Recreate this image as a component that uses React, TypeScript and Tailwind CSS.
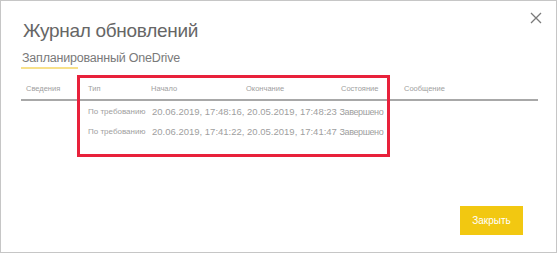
import React from "react";

const rows = [
  { type: "По требованию", text: "20.06.2019, 17:48:16, 20.05.2019, 17:48:23", status: "Завершено" },
  { type: "По требованию", text: "20.06.2019, 17:41:22, 20.05.2019, 17:41:47", status: "Завершено" },
];

export default function App() {
  return (
    <div className="relative w-[557px] h-[253px] bg-white border border-[#c6c6c6] overflow-hidden font-['Liberation_Sans',Arial,sans-serif]">
      <button className="absolute right-[12px] top-[9px] w-[16px] h-[16px] flex items-center justify-center">
        <svg width="12" height="12" viewBox="0 0 12 12">
          <path d="M1 1 L11 11 M11 1 L1 11" stroke="#7a7a7a" strokeWidth="1.3" />
        </svg>
      </button>

      <div className="pl-[20px] pt-[17px]">
        <h1 className="text-[19px] leading-[26px] text-[#666666] pl-[2px] tracking-[-0.3px]">Журнал обновлений</h1>
        <div className="mt-[6px] inline-block">
          <div className="text-[12.5px] leading-[16px] text-[#7a7a7a] pl-[1px] tracking-[-0.2px]">Запланированный OneDrive</div>
          <div className="mt-[1px] h-[2px] w-[57px] bg-[#f7e08a]" />
        </div>

        <div className="mt-[9px] w-[517px]">
          <div className="flex items-center h-[23px] text-[7.5px] text-[#a0a0a0] border-b-2 border-[#a8a8a8]">
            <div className="w-[67px] pl-[5px]">Сведения</div>
            <div className="w-[63px]">Тип</div>
            <div className="w-[95px]">Начало</div>
            <div className="w-[95px]">Окончание</div>
            <div className="w-[63px]">Состояние</div>
            <div className="w-[80px]">Сообщение</div>
          </div>
          {rows.map((r, i) => (
            <div key={i} className={`flex items-center h-[20px] text-[#a0a0a0] ${i === 0 ? "mt-[1px]" : ""}`}>
              <div className="w-[67px]" />
              <div className="w-[64px] text-[8px] whitespace-nowrap">{r.type}</div>
              <div className="text-[9.5px] whitespace-nowrap">
                {r.text}{" "}
                <span className="text-[9px] tracking-[-0.4px]">{r.status}</span>
              </div>
            </div>
          ))}
        </div>
      </div>

      <div className="absolute left-[76px] top-[74px] w-[313px] h-[82px] border-[3px] border-[#e8213b]" />

      <button className="absolute left-[459px] top-[205px] w-[63px] h-[29px] bg-[#f2c811] text-white text-[10px] flex items-center justify-center">
        Закрыть
      </button>
    </div>
  );
}
